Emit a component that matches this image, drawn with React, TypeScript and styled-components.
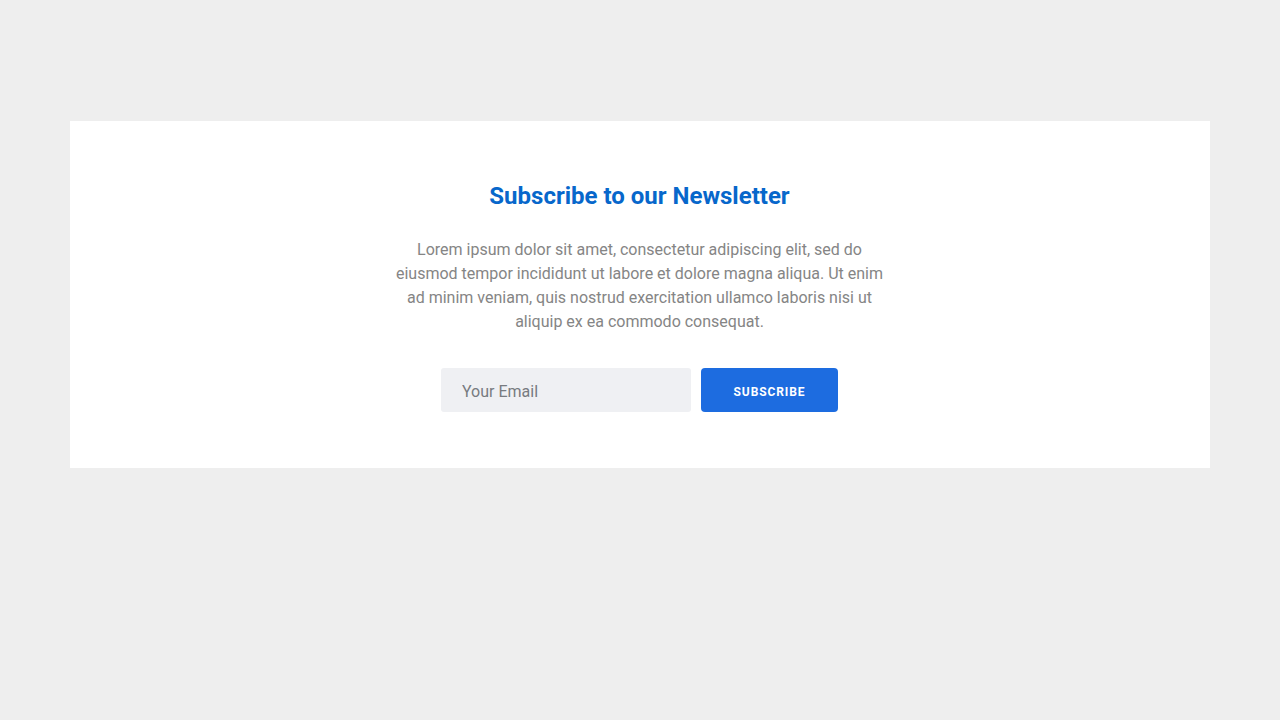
import React from "react";
import styled, { createGlobalStyle } from "styled-components";

const GlobalStyle = createGlobalStyle`
  html, body {
    margin: 0;
    padding: 0;
    background: #eeeeee;
    font-family: Roboto, "Noto Sans", Arial, sans-serif;
  }
`;

export default function App() {
  return (
    <>
      <GlobalStyle />
      <Page>
        <Card>
          <Title>Subscribe to our Newsletter</Title>
          <Text>
            Lorem ipsum dolor sit amet, consectetur adipiscing elit, sed do
            eiusmod tempor incididunt ut labore et dolore magna aliqua. Ut enim
            ad minim veniam, quis nostrud exercitation ullamco laboris nisi ut
            aliquip ex ea commodo consequat.
          </Text>
          <Form onSubmit={(e) => e.preventDefault()}>
            <EmailInput type="email" placeholder="Your Email" />
            <SubscribeButton type="submit">Subscribe</SubscribeButton>
          </Form>
        </Card>
      </Page>
    </>
  );
}

const Page = styled.div`
  min-height: 720px;
  padding: 121px 70px;
  box-sizing: border-box;
`;

const Card = styled.div`
  background: #ffffff;
  padding: 59px 21px 56px 20px;
  display: flex;
  flex-direction: column;
  align-items: center;
`;

const Title = styled.h2`
  margin: 0;
  font-size: 24px;
  line-height: 32px;
  font-weight: 700;
  color: #0767cb;
`;

const Text = styled.p`
  margin: 26px 0 0;
  max-width: 490px;
  text-align: center;
  font-size: 16px;
  line-height: 24px;
  color: #858585;
`;

const Form = styled.form`
  margin-top: 34px;
  display: flex;
  gap: 10px;
`;

const EmailInput = styled.input`
  width: 250px;
  height: 44px;
  box-sizing: border-box;
  border: none;
  border-radius: 3px;
  background: #eff0f3;
  padding: 2px 21px 0;
  font-family: inherit;
  font-size: 16px;
  color: #333;
  outline: none;

  &::placeholder {
    color: #777b80;
  }
`;

const SubscribeButton = styled.button`
  width: 137px;
  height: 44px;
  padding: 3px 0 0;
  border: none;
  border-radius: 4px;
  background: #1d6ce0;
  color: #ffffff;
  font-family: inherit;
  font-size: 12px;
  font-weight: 700;
  letter-spacing: 0.9px;
  text-transform: uppercase;
  cursor: pointer;
`;
